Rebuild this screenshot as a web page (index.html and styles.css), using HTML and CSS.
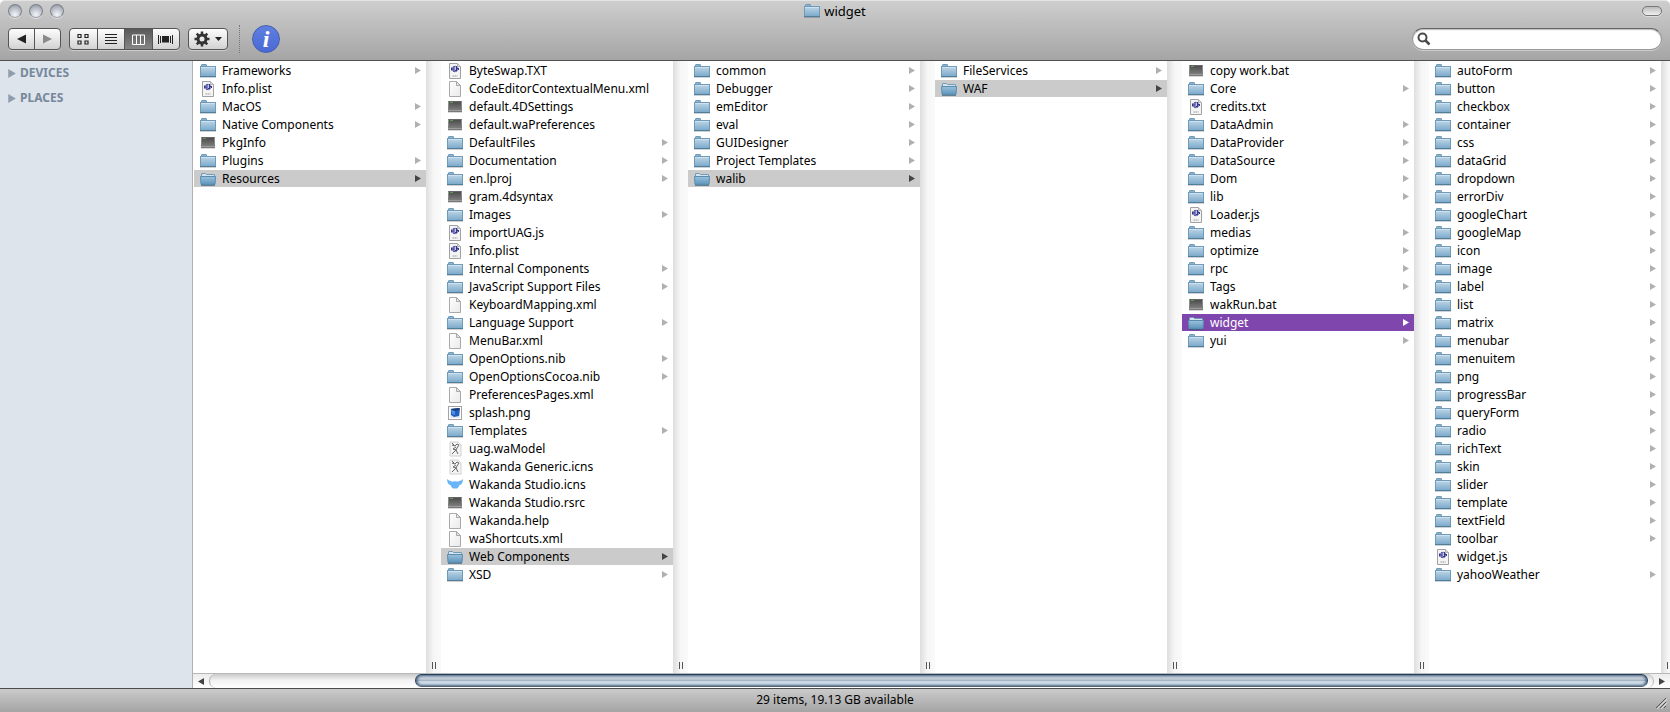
FILE: index.html
```html
<!DOCTYPE html>
<html lang="en">

<head>
    <meta charset="utf-8">
    <meta name="viewport" content="width=device-width, initial-scale=1.0">
    <title>widget</title>
    <link rel="stylesheet" href="styles.css">
</head>

<body>
    <svg class="sprites" width="0" height="0" aria-hidden="true">
        <defs>
            <linearGradient id="folder-fill" x1="0" y1="0" x2="0" y2="1">
                <stop offset="0" stop-color="#bfd7e8"/>
                <stop offset="1" stop-color="#7aa8c9"/>
            </linearGradient>
            <linearGradient id="folder-open-fill" x1="0" y1="0" x2="0" y2="1">
                <stop offset="0" stop-color="#9cc2dc"/>
                <stop offset="1" stop-color="#5c94bb"/>
            </linearGradient>
            <linearGradient id="exec-fill" x1="0" y1="0" x2="0" y2="1">
                <stop offset="0" stop-color="#474747"/>
                <stop offset="1" stop-color="#868686"/>
            </linearGradient>
            <linearGradient id="doc-fill" x1="0" y1="0" x2="1" y2="1">
                <stop offset="0" stop-color="#ffffff"/>
                <stop offset="1" stop-color="#e9e9e9"/>
            </linearGradient>
            <symbol id="folder" viewBox="0 0 16 16">
                <path d="M1.500 3.500V2q0-.5.5-.5h4q.5 0 .5.5v1.500z" fill="#8db4cf" stroke="#6f9ab8"/>
                <rect x=".5" y="3.500" width="15" height="10" fill="url(#folder-fill)" stroke="#6f9ab8"/>
                <path d="M1 4.500h14" stroke="#cfe1ee"/>
                <path d="M0 13.500h16" stroke="#4f7f9f"/>
                <path d="M0 14.500h16" stroke="#000" stroke-opacity=".18"/>
            </symbol>
            <symbol id="folder-open" viewBox="0 0 16 16">
                <path d="M1.500 12.500V3q0-.5.5-.5h3.500l1 1h7.500q.5 0 .5.5v8.500z" fill="#d5e4ee" stroke="#6f9ab8"/>
                <path d="M.5 5.500h15l-.5 8H1z" fill="url(#folder-open-fill)" stroke="#5a8cae"/>
                <path d="M1 14.500h14" stroke="#365f7d" stroke-opacity=".7"/>
            </symbol>
            <symbol id="exec" viewBox="0 0 16 16">
                <path d="M1.500 2h13l.5 9v1.500H1V11z" fill="url(#exec-fill)"/>
                <path d="M1.500 2.500h13" stroke="#666"/>
                <path d="M3 3.500h3" stroke="#64945a"/>
                <path d="M1 11.500h14" stroke="#9d9d9d"/>
                <path d="M1 12.500h14" stroke="#777"/>
                <path d="M1 13.500h14" stroke="#000" stroke-opacity=".15"/>
            </symbol>
            <symbol id="doc" viewBox="0 0 16 16">
                <path d="M2.500.5h7l4 4v11h-11z" fill="url(#doc-fill)" stroke="#a9a9a9"/>
                <path d="M9.500.5v4h4z" fill="#e2e2e2" stroke="#a9a9a9"/>
            </symbol>
            <symbol id="text" viewBox="0 0 16 16">
                <path d="M2.500.5h8l3 3v12h-11z" fill="#f4f4f4" stroke="#a0a0a0"/>
                <path d="M10.500.5v3h3z" fill="#ddd" stroke="#b5b5b5"/>
                <circle cx="8" cy="6" r="2.800" fill="#c9c9e6" stroke="#7b7bbd"/>
                <path d="M4.500 4.500v3M7 3v6M9.500 3v5M11.500 5v2M4 6h3M8 8l3-3" fill="none" stroke="#36368e"/>
                <path d="M5.500 13h5" stroke="#9b9b9b" stroke-dasharray="1.500 .5"/>
            </symbol>
            <symbol id="image" viewBox="0 0 16 16">
                <rect x="1.500" y="1.500" width="13" height="13" fill="#fff" stroke="#a3a3a3"/>
                <rect x="3" y="3" width="10" height="10" fill="#e4eaf2"/>
                <path d="M4 4l8-1 1 1-1 7-5 1-3-2z" fill="#225fbd"/>
                <path d="M4 4l8-1 1 1-5 2z" fill="#173869"/>
                <path d="M4 5l4 1v4l-3-1z" fill="#4d8de6"/>
            </symbol>
            <symbol id="model" viewBox="0 0 16 16">
                <path d="M3 1h8l3 3v11H3z" fill="#f4f4f4" stroke="#d0d0d0"/>
                <path d="M5 4l3 1 2-2 2 1-2 3-1 2 2 4M9 6L6 8l3 1-2 2-2 2M5 2l2 2" fill="none" stroke="#666"/>
            </symbol>
            <symbol id="studio" viewBox="0 0 16 16">
                <path d="M0 2q2 2 4 2 1 1 2 .5 2-.5 4 0 1 .5 2-.5 2 0 4-2 0 3-1.500 5-1 1-2 1-1 3-2.500 3.500h-4Q4.500 11 3.500 8q-1 0-2-1Q0 5 0 2z" fill="#67b4f8"/>
            </symbol>
            <symbol id="arrow" viewBox="0 0 6 7">
                <path d="M0 0l6 3.500-6 3.500z" fill="currentColor"/>
            </symbol>
        </defs>
    </svg>

    <header class="toolbar">
        <div class="titlebar">
            <div class="lights">
                <button class="light" aria-label="Close"></button>
                <button class="light" aria-label="Minimize"></button>
                <button class="light" aria-label="Zoom"></button>
            </div>
            <h1><svg width="16" height="16"><use href="#folder"/></svg>widget</h1>
            <button class="pill" aria-label="Toggle toolbar"></button>
        </div>
        <div class="controls">
            <div class="group nav">
                <button aria-label="Back"><svg width="9" height="10"><path d="M9 .5v9L0 5z" fill="#222"/></svg></button>
                <button aria-label="Forward"><svg width="9" height="10"><path d="M0 .5v9L9 5z" fill="#8b8b8b"/></svg></button>
            </div>
            <div class="group views">
                <button aria-label="Icons">
                    <svg width="12" height="11" fill="none" stroke="#222">
                        <path d="M1 .5h3v3H1zM8 .5h3v3H8zM1 7h3v3H1zM8 7h3v3H8z" stroke-width="1.200"/>
                    </svg>
                </button>
                <button aria-label="List">
                    <svg width="12" height="11" stroke="#222"><path d="M0 .5h12M0 3.500h12M0 6.500h12M0 9.500h12"/></svg>
                </button>
                <button class="active" aria-label="Columns">
                    <svg width="13" height="11" fill="none" stroke="#fff"><path d="M.5 1h12M.5 1v9.500h12V1M4.500 1v9M8.500 1v9"/></svg>
                </button>
                <button aria-label="Cover Flow">
                    <svg width="15" height="11" stroke="#222"><path d="M.5 1v9M2.500 2v7M12.500 2v7M14.500 1v9"/><path d="M4 2h7v6.500H4z" fill="#222" stroke="none"/></svg>
                </button>
            </div>
            <div class="group action">
                <button aria-label="Action">
                    <svg width="16" height="16" viewBox="0 0 16 16">
                        <circle cx="8" cy="8" r="4" fill="none" stroke="#333" stroke-width="3"/>
                        <path d="M8 .5v3M8 12.500v3M.5 8h3M12.500 8h3M2.700 2.700l2 2M11.300 11.300l2 2M2.700 13.300l2-2M11.300 4.700l2-2" stroke="#333" stroke-width="2.500"/>
                    </svg>
                    <svg width="7" height="4"><path d="M0 0h7L3.500 4z" fill="#222"/></svg>
                </button>
            </div>
            <div class="divider"></div>
            <button class="info" aria-label="Get Info">i</button>
            <label class="search">
                <svg width="14" height="14" viewBox="0 0 14 14" fill="none" stroke="#4a4a4a">
                    <circle cx="5.500" cy="5.500" r="4" stroke-width="2"/>
                    <path d="M8.500 8.500l4 4" stroke-width="2.500"/>
                </svg>
                <input type="search" aria-label="Search">
            </label>
        </div>
    </header>

    <main>
        <nav class="sidebar">
            <h2><svg width="8" height="9" viewBox="0 0 6 7"><use href="#arrow"/></svg>DEVICES</h2>
            <h2><svg width="8" height="9" viewBox="0 0 6 7"><use href="#arrow"/></svg>PLACES</h2>
        </nav>
        <section class="browser">
            <div class="columns" id="columns"></div>
            <div class="scrollbar">
                <button aria-label="Scroll left"><svg width="6" height="7"><path d="M6 0v7L0 3.500z"/></svg></button>
                <div class="track"><div class="thumb"></div></div>
                <button aria-label="Scroll right"><svg width="6" height="7"><path d="M0 0v7l6-3.500z"/></svg></button>
            </div>
        </section>
    </main>

    <footer>
        29 items, 19.13 GB available
        <svg class="grip" width="12" height="12" stroke="#555"><path d="M1 11L11 1M5 11l6-6M9 11l2-2"/><path d="M2 12L12 2M6 12l6-6" stroke="#ddd"/></svg>
    </footer>
    <script src="browser.js"></script>
</body>

</html>
```
FILE: styles.css
```css
body {
    display: flex;
    flex-direction: column;
    height: 100vh;
    margin: 0;
    overflow: hidden;
    font-family: "Noto Sans", sans-serif;
    font-size: 12px;
    color: #000;
    background: #fff;
}

button {
    border: 0;
    padding: 0;
    background: none;
}

svg {
    display: block;
    flex: none;
}

.sprites {
    position: absolute;
}

.toolbar {
    box-sizing: border-box;
    height: 61px;
    flex: none;
    border-top: 1px solid #e4e4e4;
    border-bottom: 1px solid #515151;
    border-radius: 5px 5px 0 0;
    background: linear-gradient(#cecece, #a5a5a5);
}

.titlebar {
    display: grid;
    grid-template-columns: 1fr auto 1fr;
    align-items: center;
    height: 20px;
    padding: 0 8px;
}

.lights {
    display: flex;
    gap: 7px;
}

.light {
    width: 14px;
    height: 14px;
    border: 1px solid #7c808a;
    border-bottom-color: #a4a8b0;
    border-radius: 50%;
    background: radial-gradient(circle at 50% 80%, #f4f6f9, #c0c4cd 50%, #8c919c);
    box-shadow: 0 1px 0 #e0e0e0;
}

.titlebar h1 {
    display: flex;
    gap: 4px;
    align-items: center;
    margin: 0;
    font-size: 13px;
    font-weight: normal;
    line-height: 20px;
}

.pill {
    justify-self: end;
    width: 20px;
    height: 10px;
    border: 1px solid #777;
    border-radius: 5px;
    background: linear-gradient(#bbb, #f0f0f0);
    box-shadow: 0 1px 0 #ddd;
}

.controls {
    display: flex;
    align-items: center;
    height: 36px;
    padding: 0 8px;
}

.group {
    display: flex;
    box-sizing: border-box;
    height: 22px;
    margin-right: 8px;
    border: 1px solid #555;
    border-radius: 4px;
    overflow: hidden;
    background: linear-gradient(#fdfdfd, #e8e8e8 50%, #d2d2d2);
    box-shadow: 0 1px 0 #ccc;
}

.group button {
    display: flex;
    flex: 1;
    gap: 5px;
    align-items: center;
    justify-content: center;
}

.group button + button {
    border-left: 1px solid #555;
}

.group .active {
    background: linear-gradient(#595959, #858585);
}

.nav {
    width: 53px;
}

.views {
    width: 111px;
}

.action {
    width: 40px;
}

.divider {
    height: 28px;
    margin: 0 12px 0 3px;
    border-left: 1px dotted #777;
}

.info {
    width: 28px;
    height: 28px;
    border: 1px solid #4560b0;
    border-radius: 50%;
    background: linear-gradient(#5f7fdf, #4a69d6);
    font: italic bold 24px/24px "Liberation Serif", serif;
    color: #fff;
}

.search {
    display: flex;
    gap: 4px;
    align-items: center;
    box-sizing: border-box;
    width: 250px;
    height: 22px;
    margin-left: auto;
    padding: 0 4px;
    border: 1px solid #999;
    border-top-color: #666;
    border-radius: 11px;
    background: #fff;
    box-shadow: inset 0 1px 1px #bbb, 0 1px 0 #ccc;
}

.search input {
    flex: 1;
    min-width: 0;
    border: 0;
    outline: 0;
    background: none;
    font: inherit;
}

main {
    display: flex;
    flex: 1;
    min-height: 0;
}

.sidebar {
    width: 192px;
    flex: none;
    border-right: 1px solid #b1b1b1;
    background: #dde4ec;
}

.sidebar h2 {
    display: flex;
    gap: 4px;
    align-items: center;
    margin: 0 0 1px;
    padding-left: 8px;
    font-size: 12px;
    line-height: 24px;
    color: #77879a;
}

.sidebar svg {
    color: #8f9dae;
}

.browser {
    display: flex;
    flex: 1;
    flex-direction: column;
    min-width: 0;
}

.columns {
    display: flex;
    flex: 1;
    min-height: 0;
    padding-left: 1px;
    overflow: hidden;
}

.column {
    width: 232px;
    flex: none;
    margin: 0;
    padding: 1px 0 0;
    list-style: none;
}

.column a {
    display: flex;
    gap: 6px;
    align-items: center;
    height: 17px;
    margin-bottom: 1px;
    padding: 0 5px 0 6px;
    line-height: 17px;
    color: #000;
    text-decoration: none;
    white-space: nowrap;
}

.column .arrow {
    margin-left: auto;
    color: #b0b0b0;
}

.column .open {
    background: #cbcbcb;
}

.column .open .arrow {
    color: #444;
}

.column .selected {
    background: #7f47ad;
    color: #fff;
}

.column .selected .arrow {
    color: #fff;
}

.splitter {
    display: flex;
    align-items: flex-end;
    justify-content: center;
    box-sizing: border-box;
    width: 15px;
    flex: none;
    padding-bottom: 4px;
    background: linear-gradient(to right, #dedede, #f6f6f6 50%, #fafafa);
}

.splitter::after {
    content: "";
    width: 2px;
    height: 7px;
    border: solid #555;
    border-width: 0 1px;
}

.scrollbar {
    display: flex;
    height: 14px;
    flex: none;
    border-top: 1px solid #b8b8b8;
    background: linear-gradient(#ececec, #fff);
}

.scrollbar button {
    display: flex;
    align-items: center;
    justify-content: center;
    width: 16px;
    flex: none;
}

.scrollbar button path {
    fill: #444;
}

.track {
    display: flex;
    box-sizing: border-box;
    flex: 1;
    padding-right: 5px;
    border-left: 1px solid #aaa;
    border-right: 1px solid #bbb;
    border-radius: 8px;
    background: linear-gradient(#cacaca, #f2f2f2 45%, #fff);
}

.track::before {
    content: "";
    flex: 1;
}

.thumb {
    box-sizing: border-box;
    flex: 6;
    height: 13px;
    border: 1px solid #24405f;
    border-bottom-color: #536273;
    border-radius: 7px;
    background: linear-gradient(#dce5ed, #c3ced9 35%, #a7b5c2 50%, #cbdae8 60%, #edf6ff);
    box-shadow: inset 0 0 3px 1px #35506f;
}

footer {
    position: relative;
    height: 23px;
    flex: none;
    border-top: 1px solid #4c4c4c;
    background: linear-gradient(#cbcbcb, #a4a4a4);
    line-height: 22px;
    text-align: center;
}

.grip {
    position: absolute;
    right: 3px;
    bottom: 3px;
}
```
FILE: browser.js
```js
// "name" is a folder, "name|icon" is a file; ">" marks the open folder, "*" the selected one
const columns = [
    ["Frameworks", "Info.plist|text", "MacOS", "Native Components", "PkgInfo|exec", "Plugins", ">Resources"],
    ["ByteSwap.TXT|text", "CodeEditorContextualMenu.xml|doc", "default.4DSettings|exec", "default.waPreferences|exec",
        "DefaultFiles", "Documentation", "en.lproj", "gram.4dsyntax|exec", "Images", "importUAG.js|text",
        "Info.plist|text", "Internal Components", "JavaScript Support Files", "KeyboardMapping.xml|doc",
        "Language Support", "MenuBar.xml|doc", "OpenOptions.nib", "OpenOptionsCocoa.nib", "PreferencesPages.xml|doc",
        "splash.png|image", "Templates", "uag.waModel|model", "Wakanda Generic.icns|model",
        "Wakanda Studio.icns|studio", "Wakanda Studio.rsrc|exec", "Wakanda.help|doc", "waShortcuts.xml|doc",
        ">Web Components", "XSD"],
    ["common", "Debugger", "emEditor", "eval", "GUIDesigner", "Project Templates", ">walib"],
    ["FileServices", ">WAF"],
    ["copy work.bat|exec", "Core", "credits.txt|text", "DataAdmin", "DataProvider", "DataSource", "Dom", "lib",
        "Loader.js|text", "medias", "optimize", "rpc", "Tags", "wakRun.bat|exec", "*widget", "yui"],
    ["autoForm", "button", "checkbox", "container", "css", "dataGrid", "dropdown", "errorDiv", "googleChart",
        "googleMap", "icon", "image", "label", "list", "matrix", "menubar", "menuitem", "png", "progressBar",
        "queryForm", "radio", "richText", "skin", "slider", "template", "textField", "toolbar", "widget.js|text",
        "yahooWeather"],
];

const row = function (entry) {
    const state = { ">": "open", "*": "selected" }[entry[0]] || "";
    const [name, file] = entry.replace(/^[>*]/, "").split("|");
    const icon = file || (state ? "folder-open" : "folder");
    const arrow = file ? "" : `<svg class="arrow" width="6" height="7"><use href="#arrow"/></svg>`;
    return `<li><a href="#" class="${state}"><svg width="16" height="16"><use href="#${icon}"/></svg>${name}${arrow}</a></li>`;
};

document.getElementById("columns").innerHTML = columns
    .map((entries) => `<ul class="column">${entries.map(row).join("")}</ul><div class="splitter"></div>`)
    .join("");
```
